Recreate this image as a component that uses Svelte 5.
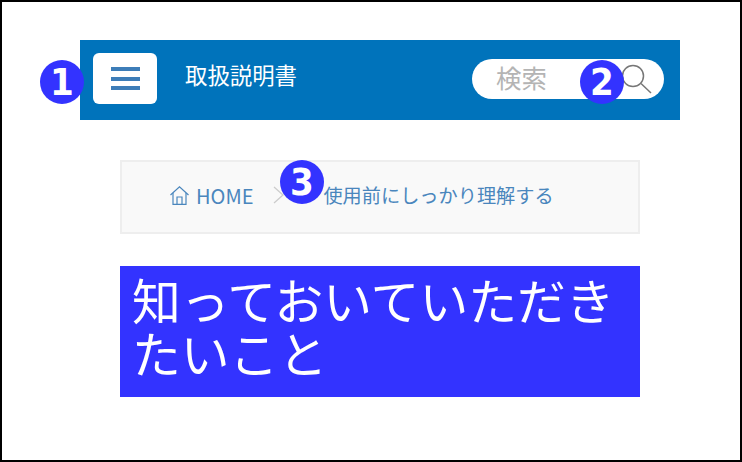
<script>
  const crumb = '使用前にしっかり理解する';
</script>

<div class="frame">
  <header class="bar">
    <button class="menu" aria-label="メニュー">
      <span></span><span></span><span></span>
    </button>
    <div class="name">取扱説明書</div>
    <div class="search">
      <span class="ph">検索</span>
      <svg class="glass" width="30" height="30" viewBox="0 0 30 30" fill="none" stroke="#777" stroke-width="1.5">
        <circle cx="11" cy="12" r="10.5" />
        <path d="M19 19.5 L29 29" />
      </svg>
    </div>
    <span class="badge b1">1</span>
    <span class="badge b2">2</span>
  </header>

  <main class="content">
    <nav class="crumbs">
      <svg class="home" width="19" height="19" viewBox="0 0 19 19" fill="none" stroke="#4a86bd" stroke-width="1.2">
        <path d="M0.5 9 L9.5 0.8 L18.5 9" />
        <path d="M3 7 V18.4 H16 V7" />
        <path d="M7 18.4 V11 H12 V18.4" />
      </svg>
      <span class="link">HOME</span>
      <svg class="sep" width="11" height="18" viewBox="0 0 11 18" fill="none" stroke="#ccc" stroke-width="1.3">
        <path d="M1 1 L10 9 L1 17" />
      </svg>
      <span class="link cur">{crumb}</span>
      <span class="badge b3">3</span>
    </nav>
    <h1 class="title">知っておいていただきたいこと</h1>
  </main>
</div>

<style>
  :global(body) { margin: 0; background: #fff; }
  .frame {
    box-sizing: border-box;
    width: 742px;
    height: 462px;
    border: 2px solid #000;
    padding: 38px 0 0 78px;
    font-family: "Noto Sans CJK JP", "Noto Sans", sans-serif;
    overflow: hidden;
  }
  .bar {
    position: relative;
    box-sizing: border-box;
    width: 600px;
    height: 80px;
    background: #0073bb;
    display: flex;
    align-items: flex-start;
    padding: 13px 16px 0 13px;
  }
  .menu {
    box-sizing: border-box;
    width: 64px;
    height: 51px;
    border: 0;
    border-radius: 6px;
    background: #fff;
    display: flex;
    flex-direction: column;
    justify-content: center;
    align-items: center;
    gap: 5.5px;
    padding: 0;
  }
  .menu span { display: block; width: 29px; height: 4px; background: #3d7db8; }
  .name { margin: 5px 0 0 28px; color: #fff; font-size: 22.4px; font-weight: 400; line-height: 32px; }
  .search {
    box-sizing: border-box;
    margin: 6px 0 0 auto;
    width: 192px;
    height: 40px;
    background: #fff;
    border-radius: 20px;
    display: flex;
    align-items: center;
    justify-content: space-between;
    padding: 0 12px 0 24px;
  }
  .ph { color: #b4b4b4; font-size: 25.5px; font-weight: 400; line-height: 1; margin-top: -4px; }
  .badge {
    position: absolute;
    width: 44px;
    height: 44px;
    border-radius: 50%;
    background: #3333ff;
    color: #fff;
    font-size: 38px;
    font-weight: 700;
    font-stretch: condensed;
    line-height: 44px;
    text-align: center;
    font-family: "DejaVu Sans", sans-serif;
  }
  .b1 { left: -40px; top: 20px; }
  .b2 { left: 500px; top: 20px; }
  .content { width: 520px; margin: 40px 0 0 40px; }
  .crumbs {
    position: relative;
    box-sizing: border-box;
    height: 74px;
    background: #f9f9f9;
    border: 2px solid #eee;
    display: flex;
    align-items: center;
    padding: 0 0 4px 48px;
    font-weight: 400;
    color: #4a86bd;
  }
  .home { margin-right: 7px; }
  .link { font-size: 20px; }
  .sep { margin: 0 0 0 20px; }
  .cur { margin-left: 39px; font-size: 19.2px; }
  .b3 { left: 158px; top: -2px; }
  .title {
    box-sizing: border-box;
    height: 131px;
    margin: 32px 0 0;
    padding: 6px 12px;
    background: #3333ff;
    color: #fff;
    font-size: 48.8px;
    font-weight: 400;
    line-height: 53px;
  }
</style>
